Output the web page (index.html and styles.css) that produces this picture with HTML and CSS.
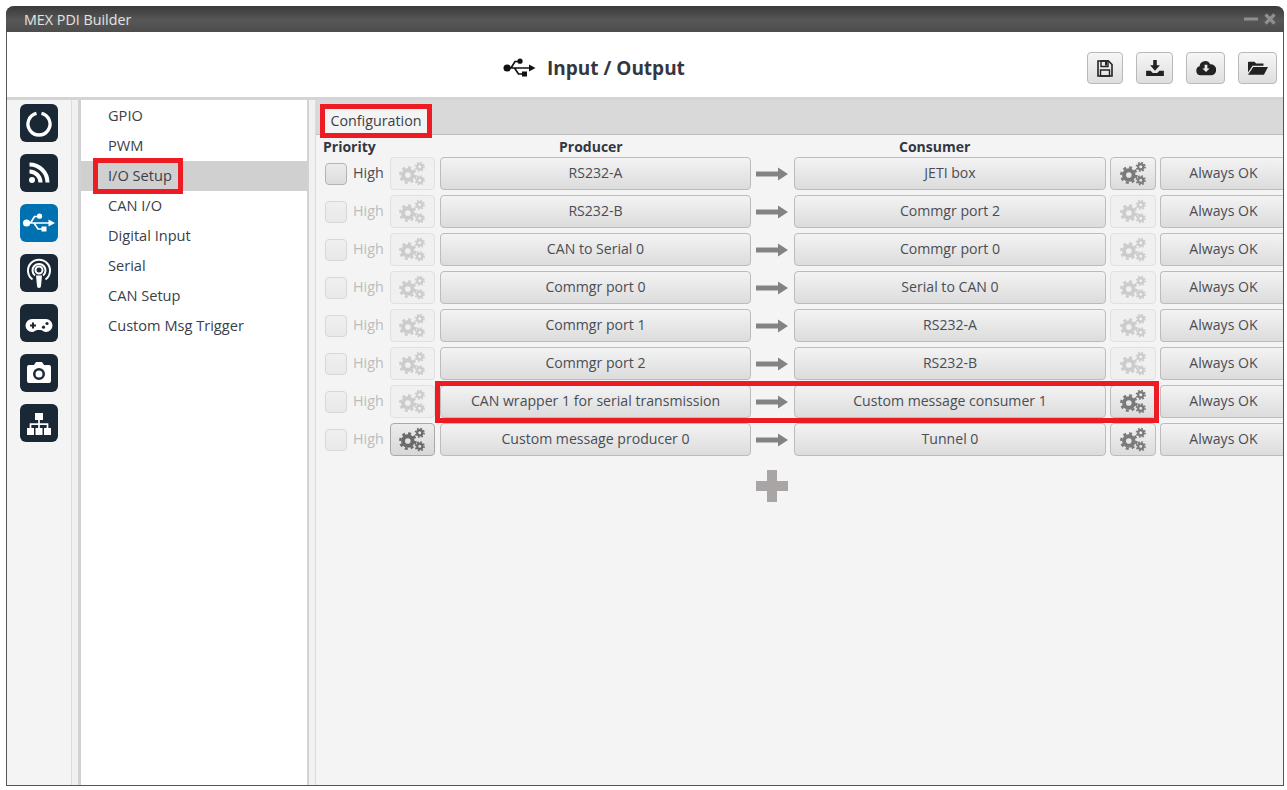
FILE: index.html
```html
<!DOCTYPE html>
<html lang="en">
<head>
<meta charset="utf-8">
<title>MEX PDI Builder</title>
<link rel="stylesheet" href="styles.css">
</head>
<body>
<svg class="defs" aria-hidden="true">
  <symbol id="gears" viewBox="0 0 26 24">
    <circle cx="8.500" cy="13.500" r="4.600" fill="none" stroke="currentColor" stroke-width="3.800"/>
    <circle cx="8.500" cy="13.500" r="7.300" fill="none" stroke="currentColor" stroke-width="2.400" stroke-dasharray="2.870 2.870"/>
    <circle cx="20" cy="5.500" r="2.500" fill="none" stroke="currentColor" stroke-width="2.100"/>
    <circle cx="20" cy="5.500" r="4.100" fill="none" stroke="currentColor" stroke-width="1.700" stroke-dasharray="1.610 1.610"/>
    <circle cx="20" cy="18.500" r="2.500" fill="none" stroke="currentColor" stroke-width="2.100"/>
    <circle cx="20" cy="18.500" r="4.100" fill="none" stroke="currentColor" stroke-width="1.700" stroke-dasharray="1.610 1.610"/>
  </symbol>
  <symbol id="arrow" viewBox="0 0 32 16">
    <path d="M0 5.500h22V1.500L32 8 22 14.500V10.500H0z" fill="currentColor"/>
  </symbol>
  <symbol id="usb" viewBox="0 0 32 20">
    <path d="M3 10h24M7.500 10l4-6.500h3.500M11 10l4 6h4" fill="none" stroke="currentColor" stroke-width="1.700"/>
    <circle cx="3.600" cy="10" r="3.600" fill="currentColor"/>
    <path d="M32 10l-6.500-3.600v7.200z" fill="currentColor"/>
    <circle cx="16.500" cy="3.200" r="2.600" fill="currentColor"/>
    <rect x="18.500" y="13.500" width="5" height="5" fill="currentColor"/>
  </symbol>
</svg>

<div class="window">
  <div class="titlebar">
    <span class="app-name">MEX PDI Builder</span>
    <span class="win-ctl">
      <svg class="ctl" viewBox="0 0 14 12"><rect x="0" y="4.500" width="14" height="3" fill="currentColor"/></svg>
      <svg class="ctl ctl-x" viewBox="0 0 12 12"><path d="M1.500 1.500l9 9M10.500 1.500l-9 9" stroke="currentColor" stroke-width="3.200" fill="none"/></svg>
    </span>
  </div>

  <header class="header">
    <div class="title">
      <svg class="title-icon"><use href="#usb"/></svg>
      <h1>Input / Output</h1>
    </div>
    <div class="tools">
      <button class="tool t-save"><svg viewBox="0 0 16 17" class="ti"><path d="M1 1h10.500L15 4.500V16H1z" fill="none" stroke="#222" stroke-width="1.600"/><path d="M4 1v5.500h7V1zM3.500 10h9v6h-9z" fill="none" stroke="#222" stroke-width="1.400"/><path d="M8 2h2v3.500H8z" fill="#222"/></svg></button>
      <button class="tool t-dl"><svg viewBox="0 0 20 18" class="ti ti-w"><path d="M8 0h4v6h3.500L10 12 4.500 6H8z" fill="#222"/><path d="M0 12h5l2.500 2.500h5L15 12h5v6H0z" fill="#222"/></svg></button>
      <button class="tool t-cloud"><svg viewBox="0 0 22 16" class="ti ti-w"><path fill-rule="evenodd" d="M5 16a5 5 0 0 1-1-9.800A6 6 0 0 1 15.500 4 5.500 5.500 0 0 1 17 16zM9.500 4.500v4H7l4 4 4-4h-2.500v-4z" fill="#222"/></svg></button>
      <button class="tool t-open"><svg viewBox="0 0 22 16" class="ti ti-w"><path d="M0 2a1 1 0 0 1 1-1h6l2 2h8v2.500H5L0 13z" fill="#222"/><path d="M5.800 7H22l-4.500 8.500H0z" fill="#222"/></svg></button>
    </div>
  </header>

  <div class="body">
    <nav class="rail">
      <a class="rail-btn"><svg viewBox="0 0 38 38"><path d="M16.500 9.300a11 11 0 1 0 5 0" fill="none" stroke="#fff" stroke-width="3.300"/></svg></a>
      <a class="rail-btn"><svg viewBox="0 0 38 38"><circle cx="12" cy="26" r="3" fill="#fff"/><path d="M9.500 17.500a11 11 0 0 1 11 11M9.500 10.500a18 18 0 0 1 18 18" fill="none" stroke="#fff" stroke-width="4"/></svg></a>
      <a class="rail-btn active"><svg viewBox="0 0 38 38"><use href="#usb" x="3" y="9" width="32" height="20" color="#fff"/></svg></a>
      <a class="rail-btn"><svg viewBox="0 0 38 38"><path d="M12.500 25.500a11 11 0 1 1 13 0M15 21.500a6.500 6.500 0 1 1 8 0" fill="none" stroke="#fff" stroke-width="2"/><circle cx="19" cy="16" r="3.500" fill="none" stroke="#fff" stroke-width="2"/><path d="M16 21.500h6l-1 10.500a2 2 0 0 1-4 0z" fill="#fff"/></svg></a>
      <a class="rail-btn"><svg viewBox="0 0 38 38"><path d="M12 15h14a6.500 6.500 0 0 1 0 13c-2.500 0-3.500-2-5.500-2h-3c-2 0-3 2-5.500 2a6.500 6.500 0 0 1 0-13z" fill="#fff"/><path d="M13 18.500v6M10 21.500h6" stroke="#1a2735" stroke-width="2"/><circle cx="27" cy="19.500" r="1.600" fill="#1a2735"/><circle cx="23.500" cy="23.200" r="1.600" fill="#1a2735"/></svg></a>
      <a class="rail-btn"><svg viewBox="0 0 38 38"><path fill-rule="evenodd" d="M9 11h5l2-3h6l2 3h5a2 2 0 0 1 2 2v14a2 2 0 0 1-2 2H9a2 2 0 0 1-2-2V13a2 2 0 0 1 2-2zM19 14a6 6 0 1 0 0 12 6 6 0 0 0 0-12zM19 16.500a3.500 3.500 0 1 1 0 7 3.500 3.500 0 0 1 0-7z" fill="#fff"/></svg></a>
      <a class="rail-btn"><svg viewBox="0 0 38 38"><path d="M15 9h8v7h-8zM7 24h7v7H7zM15.500 24h7v7h-7zM24 24h7v7h-7z" fill="#fff"/><path d="M19 16v8M10.500 24v-3.800h17V24" fill="none" stroke="#fff" stroke-width="1.700"/></svg></a>
    </nav>
    <div class="split"></div>
    <ul class="menu">
      <li>GPIO</li>
      <li>PWM</li>
      <li class="sel">I/O Setup</li>
      <li>CAN I/O</li>
      <li>Digital Input</li>
      <li>Serial</li>
      <li>CAN Setup</li>
      <li>Custom Msg Trigger</li>
    </ul>
    <div class="split split-r"></div>
    <main class="content">
      <div class="tabs"><div class="tab">Configuration</div></div>
      <div class="heads">
        <b class="h-pri">Priority</b>
        <b class="h-pro">Producer</b>
        <b class="h-con">Consumer</b>
      </div>
      <div class="rows">
        <div class="row">
          <span class="cb"></span><span class="high">High</span>
          <button class="gear off"><svg><use href="#gears"/></svg></button>
          <button class="btn">RS232-A</button>
          <svg class="arr"><use href="#arrow"/></svg>
          <button class="btn">JETI box</button>
          <button class="gear"><svg><use href="#gears"/></svg></button>
          <button class="btn">Always OK</button>
        </div>
        <div class="row">
          <span class="cb off"></span><span class="high off">High</span>
          <button class="gear off"><svg><use href="#gears"/></svg></button>
          <button class="btn">RS232-B</button>
          <svg class="arr"><use href="#arrow"/></svg>
          <button class="btn">Commgr port 2</button>
          <button class="gear off"><svg><use href="#gears"/></svg></button>
          <button class="btn">Always OK</button>
        </div>
        <div class="row">
          <span class="cb off"></span><span class="high off">High</span>
          <button class="gear off"><svg><use href="#gears"/></svg></button>
          <button class="btn">CAN to Serial 0</button>
          <svg class="arr"><use href="#arrow"/></svg>
          <button class="btn">Commgr port 0</button>
          <button class="gear off"><svg><use href="#gears"/></svg></button>
          <button class="btn">Always OK</button>
        </div>
        <div class="row">
          <span class="cb off"></span><span class="high off">High</span>
          <button class="gear off"><svg><use href="#gears"/></svg></button>
          <button class="btn">Commgr port 0</button>
          <svg class="arr"><use href="#arrow"/></svg>
          <button class="btn">Serial to CAN 0</button>
          <button class="gear off"><svg><use href="#gears"/></svg></button>
          <button class="btn">Always OK</button>
        </div>
        <div class="row">
          <span class="cb off"></span><span class="high off">High</span>
          <button class="gear off"><svg><use href="#gears"/></svg></button>
          <button class="btn">Commgr port 1</button>
          <svg class="arr"><use href="#arrow"/></svg>
          <button class="btn">RS232-A</button>
          <button class="gear off"><svg><use href="#gears"/></svg></button>
          <button class="btn">Always OK</button>
        </div>
        <div class="row">
          <span class="cb off"></span><span class="high off">High</span>
          <button class="gear off"><svg><use href="#gears"/></svg></button>
          <button class="btn">Commgr port 2</button>
          <svg class="arr"><use href="#arrow"/></svg>
          <button class="btn">RS232-B</button>
          <button class="gear off"><svg><use href="#gears"/></svg></button>
          <button class="btn">Always OK</button>
        </div>
        <div class="row">
          <span class="cb off"></span><span class="high off">High</span>
          <button class="gear off"><svg><use href="#gears"/></svg></button>
          <button class="btn">CAN wrapper 1 for serial transmission</button>
          <svg class="arr"><use href="#arrow"/></svg>
          <button class="btn">Custom message consumer 1</button>
          <button class="gear"><svg><use href="#gears"/></svg></button>
          <button class="btn">Always OK</button>
        </div>
        <div class="row">
          <span class="cb off"></span><span class="high off">High</span>
          <button class="gear on"><svg><use href="#gears"/></svg></button>
          <button class="btn">Custom message producer 0</button>
          <svg class="arr"><use href="#arrow"/></svg>
          <button class="btn">Tunnel 0</button>
          <button class="gear"><svg><use href="#gears"/></svg></button>
          <button class="btn">Always OK</button>
        </div>
      </div>
      <div class="add-row">
        <svg class="plus" viewBox="0 0 32 32"><path d="M11 0h10v11h11v10H21v11H11V21H0V11h11z" fill="#aaa5a5"/></svg>
      </div>
    </main>
  </div>

  <div class="mark mark-io"></div>
  <div class="mark mark-cfg"></div>
  <div class="mark mark-row"></div>
</div>
</body>
</html>
```
FILE: styles.css
```css
* { box-sizing: border-box; }
html, body { margin: 0; height: 100%; background: #fff; overflow: hidden; }
body { padding: 6px 3px 4px 6px; font-family: "Open Sans", "Noto Sans", sans-serif; font-size: 14.1px; color: #3a3f48; }
.defs { position: absolute; width: 0; height: 0; }

.window {
  position: relative;
  width: 1278px;
  height: 780px;
  display: flex;
  flex-direction: column;
  border: 1px solid #555;
  border-top: 0;
  border-radius: 8px 8px 0 0;
  background: #fff;
}

.titlebar {
  height: 26px;
  margin: 0 -1px;
  padding: 0 8px 0 18px;
  display: flex;
  align-items: center;
  justify-content: space-between;
  background: linear-gradient(#3a3a3a, #575757 55%, #4c4c4c);
  border-radius: 8px 8px 0 0;
  color: #e4e4e4;
  font-size: 14.3px;
  flex: none;
}
.win-ctl { display: flex; gap: 6px; align-items: center; color: #8f8f8f; }
.ctl { width: 14px; height: 12px; display: block; }
.ctl-x { width: 12px; }

.header {
  height: 65px;
  flex: none;
  display: flex;
  align-items: center;
  justify-content: space-between;
  padding: 0 6px 0 496px;
  background: #fff;
}
.title { display: flex; align-items: center; gap: 11px; color: #111; margin-top: 7px; }
.title-icon { width: 33px; height: 20px; color: #111; }
.title h1 { margin: 0; font-size: 19px; line-height: 28px; font-weight: 700; color: #333742; }
.tools { display: flex; gap: 13px; margin-top: 7px; }
.tool {
  padding: 0;
  height: 32px;
  display: flex;
  align-items: center;
  justify-content: center;
  border: 1px solid #b9b9b9;
  border-radius: 4px;
  background: linear-gradient(#f6f6f6, #dedede);
}
.t-save { width: 36px; }
.t-dl { width: 37px; }
.t-cloud { width: 39px; }
.t-open { width: 39px; }
.ti { width: 16px; height: 17px; display: block; }
.ti-w { width: 20px; height: 16px; }

.body {
  flex: 1;
  min-height: 0;
  display: flex;
  border-top: 3px solid #d4d4d4;
  background: #f4f4f4;
}

.rail {
  width: 65px;
  flex: none;
  padding: 4px 0 0 13px;
  display: flex;
  flex-direction: column;
  gap: 12px;
  background: #f4f4f4;
  border-right: 1px solid #dcdcdc;
}
.rail-btn {
  display: block;
  width: 38px;
  height: 38px;
  border-radius: 6px;
  background: #1a2735;
}
.rail-btn svg { display: block; width: 38px; height: 38px; }
.rail-btn.active { background: #0071b0; }

.split {
  width: 9px;
  flex: none;
  background: #f1f1f1;
  border-right: 3px solid #d2d2d2;
}
.split-r { width: 8px; border-right: 0; border-left: 2px solid #d2d2d2; background: #f1f1f1; }

.menu {
  width: 226px;
  flex: none;
  margin: 0;
  padding: 1px 0 0;
  list-style: none;
  background: #fff;
}
.menu li {
  height: 30px;
  line-height: 28px;
  padding-left: 27px;
  font-size: 14.6px;
}
.menu li.sel { background: #d0d0d0; }

.content {
  flex: 1;
  min-width: 0;
  overflow: hidden;
  display: flex;
  flex-direction: column;
  border-left: 1px solid #dcdcdc;
}
.tabs {
  height: 35px;
  flex: none;
  padding-left: 5px;
  background: #d9d9d9;
  border-bottom: 1px solid #bfbfbf;
  display: flex;
  align-items: flex-end;
}
.tab {
  width: 110px;
  height: 29px;
  line-height: 31px;
  text-align: center;
  background: #f4f4f4;
  color: #3a3f48;
  font-size: 14.3px;
}
.heads {
  height: 22px;
  flex: none;
  position: relative;
  display: grid;
  grid-template-columns: 118px 354px 1fr;
  align-items: center;
  padding: 1px 0 0 7px;
}
.heads b { font-weight: 700; font-size: 14px; color: #333742; }
.h-pro { padding-left: 118px; }
.h-con { padding-left: 104px; }

.rows { display: flex; flex-direction: column; gap: 5px; padding-left: 9px; }
.row { display: flex; align-items: center; height: 33px; flex: none; width: 990px; }
.cb {
  width: 22px;
  height: 22px;
  flex: none;
  border: 1px solid #b4b4b4;
  border-radius: 4px;
  background: linear-gradient(#ececec, #dcdcdc);
}
.cb.off { opacity: .45; }
.high { width: 43px; flex: none; padding-left: 6px; margin-bottom: 2px; font-size: 14.3px; color: #4a4d55; }
.high.off { color: #bcbcbc; }

.btn, .gear {
  height: 33px;
  padding: 0 0 3px;
  border: 1px solid #bcbcbc;
  border-radius: 4px;
  background: linear-gradient(#f3f3f3, #dcdcdc);
  font: inherit;
  color: #4a4d55;
  flex: none;
  display: flex;
  align-items: center;
  justify-content: center;
}
.row .btn { width: 311px; margin-left: 5px; }
.row .arr + .btn { margin-left: 0; width: 312px; }
.row .gear + .btn:last-child { width: 126px; margin-left: 4px; border-right: 0; border-radius: 4px 0 0 4px; }
.gear { width: 45px; color: #7a7a7a; padding: 0; }
.gear svg { width: 27px; height: 25px; display: block; }
.gear.off { background: #f0f0f0; border-color: #e0e0e0; color: #cccccc; }
.gear.on { color: #6a6a6a; background: linear-gradient(#ececec, #d8d8d8); border-color: #a8a8a8; }
.row .btn + .gear { margin-left: 4px; width: 46px; }

.arr { width: 32px; height: 16px; margin: 0 6px 0 5px; flex: none; color: #838383; }

.add-row { padding: 14px 0 0 440px; }
.plus { width: 32px; height: 32px; display: block; }

.mark { position: absolute; border: 5px solid #ed1c24; pointer-events: none; }
.mark-io { left: 86px; top: 152px; width: 90px; height: 36px; }
.mark-cfg { left: 313px; top: 98px; width: 112px; height: 34px; }
.mark-row { left: 428px; top: 375px; width: 724px; height: 42px; }
```
